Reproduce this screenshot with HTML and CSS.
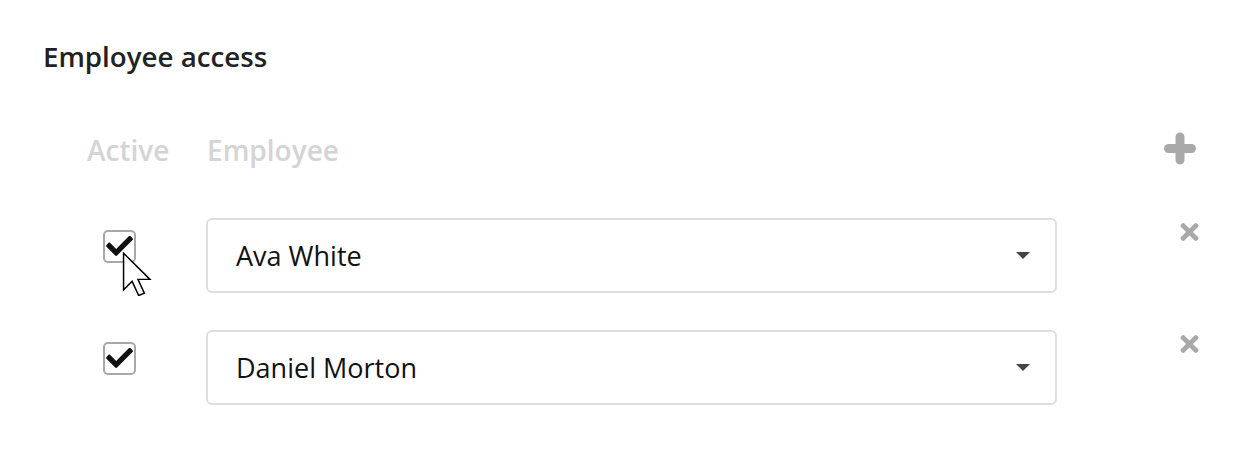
FILE: index.html
```html
<!DOCTYPE html>
<html lang="en">
<head>
  <meta charset="UTF-8">
  <title>Employee access</title>
  <link rel="stylesheet" href="styles.css">
</head>
<body>

<section class="access">
  <h2>Employee access</h2>

  <div class="head-row">
    <div class="col-active">Active</div>
    <div class="col-employee">Employee</div>
    <button class="add-btn" title="Add">
      <svg width="34" height="33" viewBox="0 0 34 33"><path d="M17 5v23M5.5 16.5h23" stroke="#a9a9a9" stroke-width="9" stroke-linecap="round"/></svg>
    </button>
  </div>

  <!-- rows -->
  <div class="emp-row">
    <div class="col-active">
      <span class="check">
        <svg width="27" height="21" viewBox="0 0 512 400"><path d="M173.9 391.4l-166.4-166.4c-10-10-10-26.2 0-36.2l36.2-36.2c10-10 26.2-10 36.2 0L192 264.7 432.1 24.6c10-10 26.2-10 36.2 0l36.2 36.2c10 10 10 26.2 0 36.2L210.1 391.4c-10 10-26.2 10-36.2 0z" fill="#111"/></svg>
      </span>
      <svg class="cursor" width="30" height="44" viewBox="0 0 12 18"><path d="M0.5 0.5v15l3.5-3.5 2.7 5.8 2.3-1-2.6-5.6h4.9z" fill="#fff" stroke="#000" stroke-width="0.6" stroke-linejoin="miter"/></svg>
    </div>
    <div class="col-employee">
      <div class="select">Ava White<span class="caret"></span></div>
    </div>
    <button class="del-btn" title="Remove">
      <svg width="19" height="18" viewBox="0 0 352 352"><path d="M242.7 176l100.1-100.1c12.3-12.3 12.3-32.2 0-44.5l-22.2-22.2c-12.3-12.3-32.2-12.3-44.5 0L176 109.3 75.9 9.2c-12.3-12.3-32.2-12.3-44.5 0L9.2 31.4c-12.3 12.3-12.3 32.2 0 44.5L109.3 176 9.2 276.1c-12.3 12.3-12.3 32.2 0 44.5l22.2 22.2c12.3 12.3 32.2 12.3 44.5 0L176 242.7l100.1 100.1c12.3 12.3 32.2 12.3 44.5 0l22.2-22.2c12.3-12.3 12.3-32.2 0-44.5L242.7 176z" fill="#a9a9a9"/></svg>
    </button>
  </div>

  <div class="emp-row">
    <div class="col-active">
      <span class="check">
        <svg width="27" height="21" viewBox="0 0 512 400"><path d="M173.9 391.4l-166.4-166.4c-10-10-10-26.2 0-36.2l36.2-36.2c10-10 26.2-10 36.2 0L192 264.7 432.1 24.6c10-10 26.2-10 36.2 0l36.2 36.2c10 10 10 26.2 0 36.2L210.1 391.4c-10 10-26.2 10-36.2 0z" fill="#111"/></svg>
      </span>
    </div>
    <div class="col-employee">
      <div class="select">Daniel Morton<span class="caret"></span></div>
    </div>
    <button class="del-btn" title="Remove">
      <svg width="19" height="18" viewBox="0 0 352 352"><path d="M242.7 176l100.1-100.1c12.3-12.3 12.3-32.2 0-44.5l-22.2-22.2c-12.3-12.3-32.2-12.3-44.5 0L176 109.3 75.9 9.2c-12.3-12.3-32.2-12.3-44.5 0L9.2 31.4c-12.3 12.3-12.3 32.2 0 44.5L109.3 176 9.2 276.1c-12.3 12.3-12.3 32.2 0 44.5l22.2 22.2c12.3 12.3 32.2 12.3 44.5 0L176 242.7l100.1 100.1c12.3 12.3 32.2 12.3 44.5 0l22.2-22.2c12.3-12.3 12.3-32.2 0-44.5L242.7 176z" fill="#a9a9a9"/></svg>
    </button>
  </div>
</section>

</body>
</html>
```

FILE: styles.css
```css
body {
  margin: 0;
  background: #fff;
  color: #111;
  font-family: 'Open Sans', 'Liberation Sans', sans-serif;
}
.access {
  padding: 38px 43px 0;
}
.access h2 {
  margin: 0;
  font-size: 27.7px;
  line-height: 36px;
  font-weight: 600;
  color: #222;
}
.head-row {
  display: flex;
  align-items: center;
  margin: 58px 0 0 44px;
  font-size: 28px;
  line-height: 36px;
  font-weight: 600;
  color: #d4d4d4;
}
.col-active {
  width: 119px;
  flex-shrink: 0;
  position: relative;
}
.col-employee {
  width: 851px;
  flex-shrink: 0;
}
.head-row .col-employee {
  padding-left: 1px;
  box-sizing: border-box;
}
.add-btn, .del-btn {
  border: none;
  background: none;
  padding: 0;
  cursor: pointer;
  display: flex;
}
.add-btn {
  margin: -4px 0 0 106px;
}
.emp-row {
  display: flex;
  align-items: flex-start;
  margin: 0 0 37px 44px;
}
.head-row + .emp-row {
  margin-top: 50px;
}
.check {
  display: flex;
  align-items: center;
  justify-content: center;
  width: 33px;
  height: 33px;
  margin: 12px 0 0 16px;
  box-sizing: border-box;
  border: 2px solid #a8a8a8;
  border-radius: 5px;
  background: #fff;
}
.check svg {
  margin-top: -3px;
}
.cursor {
  position: absolute;
  left: 35px;
  top: 34px;
}
.select {
  display: flex;
  align-items: center;
  justify-content: space-between;
  height: 75px;
  box-sizing: border-box;
  border: 2px solid #dedede;
  border-radius: 6px;
  padding: 0 25px 0 28px;
  font-size: 27px;
  color: #111;
}
.caret {
  width: 0;
  height: 0;
  border-left: 7px solid transparent;
  border-right: 7px solid transparent;
  border-top: 7px solid #444;
}
.del-btn {
  margin: 5px 0 0 123px;
}
```
